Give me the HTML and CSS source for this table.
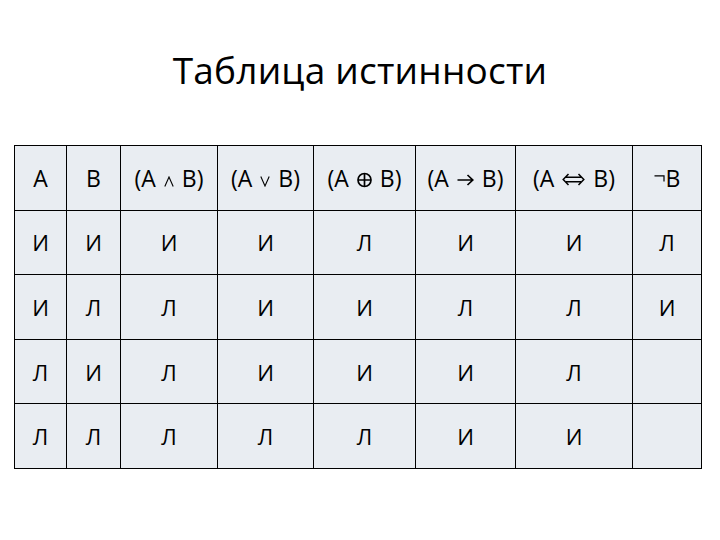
FILE: index.html
```html
<!DOCTYPE html>
<html lang="ru">
<head>
<meta charset="utf-8">
<link rel="stylesheet" href="styles.css">
</head>
<body>
<h1 class="title">Таблица истинности</h1>
<table class="truth">
<colgroup>
<col class="c1"><col class="c2"><col class="c3"><col class="c4"><col class="c5"><col class="c6"><col class="c7"><col class="c8">
</colgroup>
<tr class="head">
<td>A</td>
<td>B</td>
<td>(A <svg class="op and" viewBox="0 0 10 11" width="10" height="11" aria-label="∧"><path d="M0.8 10.5 L5 1 L9.2 10.5"/></svg> B)</td>
<td>(A <svg class="op or" viewBox="0 0 10 11" width="10" height="11" aria-label="∨"><path d="M0.8 0.5 L5 10 L9.2 0.5"/></svg> B)</td>
<td>(A <svg class="op xor" viewBox="0 0 15 16" width="15" height="16" aria-label="⊕"><circle cx="7.5" cy="8" r="6.5"/><path d="M7.5 1.5 V14.5 M1 8 H14"/></svg> B)</td>
<td>(A <svg class="op imp" viewBox="0 0 17 12" width="17" height="12" aria-label="→"><path d="M0.5 6 H15.5 M10.5 1 L15.8 6 L10.5 11"/></svg> B)</td>
<td>(A <svg class="op eqv" viewBox="0 0 23 13" width="23" height="13" aria-label="⇔"><path d="M6.5 1 L1.2 6.5 L6.5 12 M16.5 1 L21.8 6.5 L16.5 12 M4.2 4.2 H18.8 M4.2 8.8 H18.8"/></svg> B)</td>
<td><svg class="op neg" viewBox="0 0 11 7" width="11" height="7" aria-label="¬"><path d="M0.5 0.8 H10 V6.5"/></svg>B</td>
</tr>
<tr><td>И</td><td>И</td><td>И</td><td>И</td><td>Л</td><td>И</td><td>И</td><td>Л</td></tr>
<tr><td>И</td><td>Л</td><td>Л</td><td>И</td><td>И</td><td>Л</td><td>Л</td><td>И</td></tr>
<tr><td>Л</td><td>И</td><td>Л</td><td>И</td><td>И</td><td>И</td><td>Л</td><td></td></tr>
<tr><td>Л</td><td>Л</td><td>Л</td><td>Л</td><td>Л</td><td>И</td><td>И</td><td></td></tr>
</table>
</body>
</html>
```
FILE: styles.css
```css
html, body {
  margin: 0;
  padding: 0;
  background: #ffffff;
}
body {
  width: 720px;
  height: 540px;
  font-family: "Open Sans", "Noto Sans", sans-serif;
  color: #000;
}
.title {
  margin: 0;
  padding-top: 48px;
  height: 145px;
  box-sizing: border-box;
  text-align: center;
  font-weight: 400;
  font-size: 37px;
  line-height: 44px;
  letter-spacing: 0.2px;
}
.truth {
  margin-left: 14px;
  border-collapse: collapse;
  table-layout: fixed;
  width: 687px;
}
.truth td {
  border: 1.5px solid #000;
  background: #e9edf2;
  height: 63.6px;
  padding: 0;
  text-align: center;
  vertical-align: middle;
  font-size: 22px;
  white-space: nowrap;
}
.truth .head td {
  font-size: 23px;
}
.op {
  fill: none;
  stroke: #000;
  stroke-linejoin: miter;
  margin: 0 2px;
}
.and, .or {
  stroke-width: 1.1;
  vertical-align: 0px;
}
.xor {
  stroke-width: 1.7;
  vertical-align: -1px;
}
.imp {
  stroke-width: 1.7;
  vertical-align: 1px;
}
.eqv {
  stroke-width: 1.5;
  vertical-align: 1px;
}
.neg {
  stroke-width: 1.2;
  vertical-align: 5px;
  margin: 0 1px 0 0;
}
.c1 { width: 52px; }
.c2 { width: 54px; }
.c3 { width: 97px; }
.c4 { width: 96px; }
.c5 { width: 102px; }
.c6 { width: 100px; }
.c7 { width: 117px; }
.c8 { width: 69px; }
```
